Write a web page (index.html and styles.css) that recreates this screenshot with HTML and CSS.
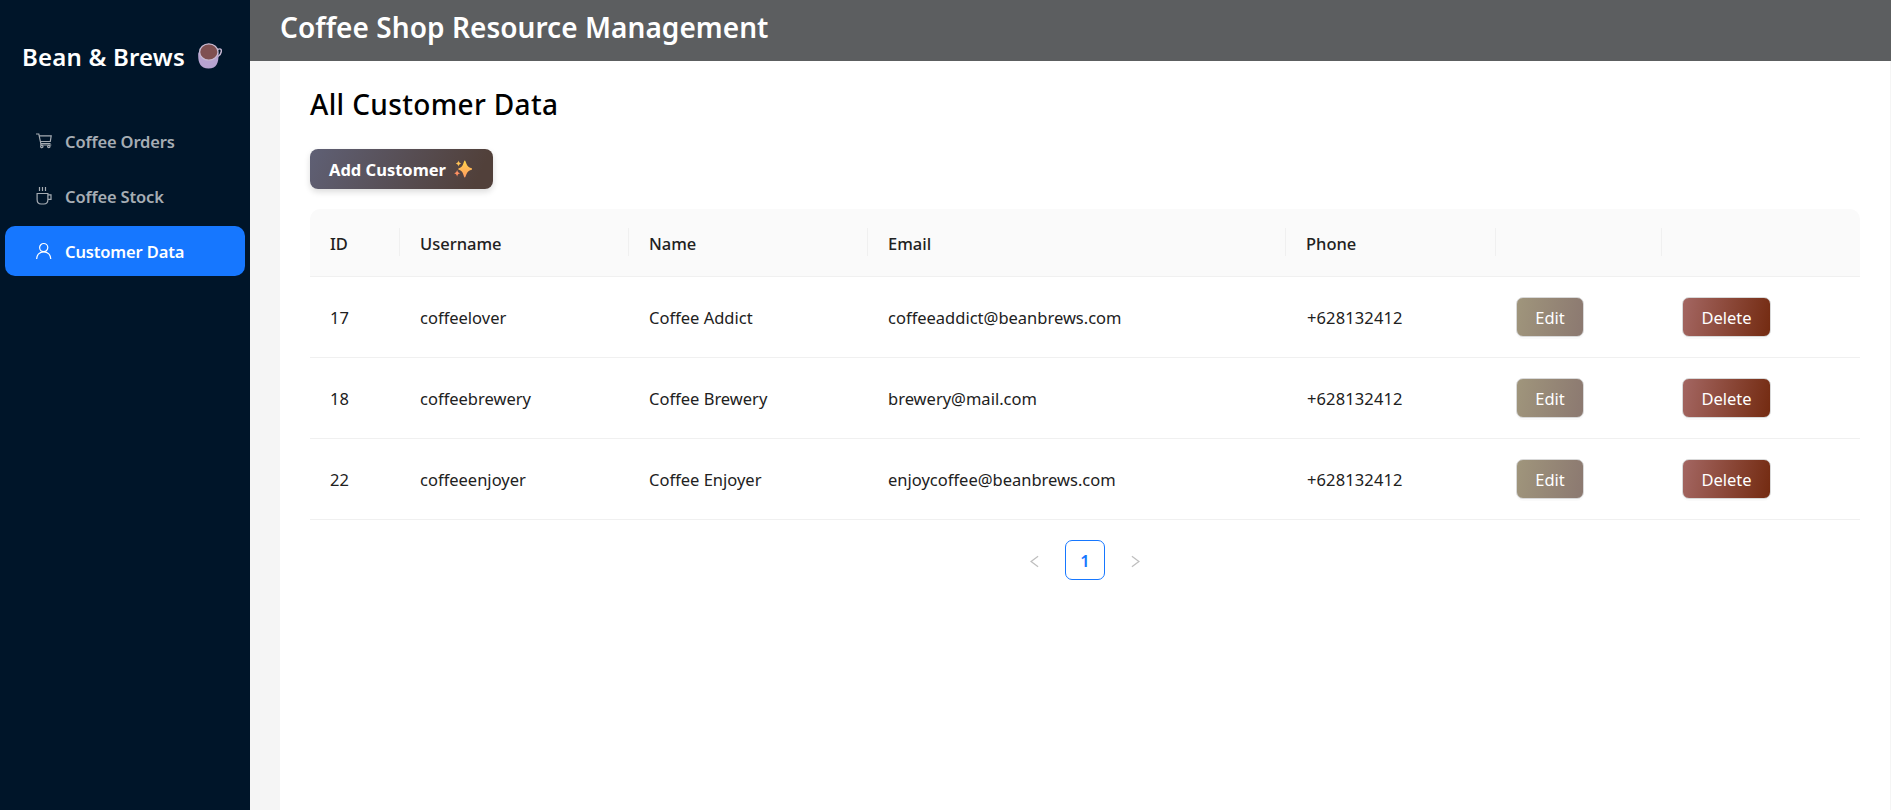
FILE: index.html
```html
<!DOCTYPE html>
<html lang="en">
<head>
<meta charset="utf-8">
<title>Coffee Shop Resource Management</title>
<link rel="stylesheet" href="styles.css">
</head>
<body>
<div class="layout">
  <aside class="sider">
    <div class="brand">
      <span class="brand-name">Bean &amp; Brews</span>
      <svg class="cup" viewBox="0 0 24 26">
        <path d="M19.500 6.500c2.500-1.300 4.300-.5 3.800 2.200-.4 2.500-1.600 4-3.600 5" fill="none" stroke="#c3b5d0" stroke-width="1.500"/>
        <path d="M.3 9.500c-.6 9 1 16 10.200 16S20.800 18.500 20.500 9.500z" fill="#b7a3d0"/>
        <ellipse cx="10.800" cy="9" rx="9.200" ry="8.200" fill="#7f5051" stroke="#c8bad2" stroke-width="1.300"/>
      </svg>
    </div>
    <nav class="menu">
      <a class="item"><svg class="icon" viewBox="0 0 16 16"><path d="M0 1h2.800l2 9.500h9.700M3.200 2.800h12L14.300 8.500H4.500M4.800 10.500v1.500h10.500"/><circle cx="5.800" cy="13.500" r="1.200"/><circle cx="12.800" cy="13.500" r="1.200"/></svg><span>Coffee Orders</span></a>
      <a class="item"><svg class="icon" viewBox="0 0 16 18"><path d="M3.500 0v4M6.500 0v4M9.500 0v4M1.100 6.500h10.800v6c0 2.800-1.500 4.500-4 4.500H5.100c-2.500 0-4-1.700-4-4.500zM12 7.800h3v4.600h-3"/></svg><span>Coffee Stock</span></a>
      <a class="item active"><svg class="icon" viewBox="0 0 16 16"><circle cx="7.700" cy="4.600" r="4.100"/><path d="M.6 16c0-4 3-7.200 7.100-7.200s7.100 3.200 7.100 7.200"/></svg><span>Customer Data</span></a>
    </nav>
  </aside>
  <div class="main">
    <header class="topbar"><h1>Coffee Shop Resource Management</h1></header>
    <main class="content">
      <h2>All Customer Data</h2>
      <button class="add"><span>Add Customer</span><svg class="sparkles" viewBox="0 0 18 18"><defs><linearGradient id="spark" x1="0" y1="0" x2="0" y2="1"><stop offset="0" stop-color="#ffd54a"/><stop offset="1" stop-color="#ff9a62"/></linearGradient></defs><path fill="url(#spark)" d="M10.800.5c1.300 0 .9 6.300 6.700 7.700 1 .3 1 1.300 0 1.600-5.800 1.400-5.400 7.700-6.700 7.700S9.900 11.200 5 9.800c-1-.3-1-1.300 0-1.600C9.900 6.800 9.500.5 10.800.5z"/><path fill="#ffc257" d="M4.500.5c.5 1.900 1 2.500 2.700 3-1.700.5-2.200 1.100-2.700 3C4 4.600 3.500 4 1.800 3.500 3.500 3 4 2.400 4.500.5z"/><path fill="#ff9163" d="M3.100 9.700c.5 2.300 1.200 3 3 3.500-1.800.5-2.500 1.200-3 3.500-.5-2.300-1.200-3-3-3.500 1.800-.5 2.500-1.200 3-3.500z"/></svg></button>
      <table class="table">
        <colgroup><col class="c1"><col class="c2"><col class="c3"><col class="c4"><col class="c5"><col class="c6"><col class="c7"></colgroup>
        <thead><tr><th>ID</th><th>Username</th><th>Name</th><th>Email</th><th>Phone</th><th></th><th></th></tr></thead>
        <tbody>
          <tr><td>17</td><td>coffeelover</td><td>Coffee Addict</td><td>coffeeaddict@beanbrews.com</td><td class="phone">+628132412</td><td><button class="btn edit">Edit</button></td><td><button class="btn delete">Delete</button></td></tr>
          <tr><td>18</td><td>coffeebrewery</td><td>Coffee Brewery</td><td>brewery@mail.com</td><td class="phone">+628132412</td><td><button class="btn edit">Edit</button></td><td><button class="btn delete">Delete</button></td></tr>
          <tr><td>22</td><td>coffeeenjoyer</td><td>Coffee Enjoyer</td><td>enjoycoffee@beanbrews.com</td><td class="phone">+628132412</td><td><button class="btn edit">Edit</button></td><td><button class="btn delete">Delete</button></td></tr>
        </tbody>
      </table>
      <div class="pager">
        <svg class="arrow" viewBox="0 0 10 14"><path d="M9 1.200 1.200 7 9 12.800"/></svg>
        <span class="page">1</span>
        <svg class="arrow" viewBox="0 0 10 14"><path d="M1 1.200 8.800 7 1 12.800"/></svg>
      </div>
    </main>
  </div>
</div>
</body>
</html>
```
FILE: styles.css
```css
* { box-sizing: border-box; }
body { margin: 0; font-family: "Noto Sans", "Open Sans", sans-serif; font-size: 16.5px; overflow: hidden; }
h1, h2 { margin: 0; font-weight: 500; white-space: nowrap; }
button { font-family: inherit; margin: 0; }
.layout { display: flex; height: 810px; background: #f5f5f5; }
.sider { width: 250px; flex: none; background: #001529; }
.brand { display: flex; align-items: center; height: 112px; padding-left: 22px; color: #fff; }
.brand-name { width: 176px; font-size: 24px; font-weight: 600; letter-spacing: .2px; white-space: nowrap; }
.cup { width: 24px; height: 26px; }
.menu { display: flex; flex-direction: column; gap: 5px; padding: 4px 5px; }
.item { display: flex; align-items: center; height: 50px; padding-left: 31px; border-radius: 10px; color: #a6adb4; font-weight: 600; font-size: 16.5px; letter-spacing: -.14px; }
.item span { margin-left: 13px; white-space: nowrap; }
.icon { width: 16px; height: 18px; fill: none; stroke: currentColor; stroke-width: 1.2; overflow: visible; }
.active { background: #1677ff; color: #fff; }
.main { flex: 1; min-width: 0; }
.topbar { height: 61px; padding: 6px 30px 0; background: #5c5e60; color: #fff; }
h1 { font-size: 28px; line-height: 42px; font-weight: 600; letter-spacing: .05px; }
.content { height: 749px; margin: 0 1px 0 30px; padding: 22px 30px; background: #fff; }
h2 { font-size: 28px; line-height: 42px; color: #000; letter-spacing: .35px; }
.add { display: flex; align-items: center; width: 183px; height: 40px; margin: 24px 0 20px; padding: 0 0 0 19px; border: 0; border-radius: 8px; background: linear-gradient(115deg, #5f6075, #51403a 90%); box-shadow: 0 3px 6px rgba(0,0,0,.14); color: #fff; font-size: 16.5px; font-weight: 700; }
.add span { width: 125px; text-align: left; white-space: nowrap; }
.sparkles { width: 18px; height: 18px; }
.table { width: 1550px; table-layout: fixed; border-collapse: separate; border-spacing: 0; color: #212121; }
.c1 { width: 90px; } .c2 { width: 229px; } .c3 { width: 239px; } .c4 { width: 418px; } .c5 { width: 210px; } .c6 { width: 166px; } .c7 { width: 198px; }
th, td { padding: 0 20px; text-align: left; border-bottom: 1px solid #f0f0f0; white-space: nowrap; }
th { height: 68px; padding-top: 2px; font-weight: 500; background: linear-gradient(#f0f0f0, #f0f0f0) right 19px / 1px 28px no-repeat #fafafa; }
th:first-child { border-top-left-radius: 10px; }
th:last-child { border-top-right-radius: 10px; background: #fafafa; }
td { height: 81px; }
.phone { padding-left: 21px; letter-spacing: .12px; }
.btn { display: block; height: 40px; padding: 0; border: 1px solid #d9d9d9; border-radius: 7px; box-shadow: 0 2px 0 rgba(0,0,0,.02); color: #fff; font-size: 16.5px; background-origin: border-box; }
.edit { width: 68px; background-image: linear-gradient(100deg, #a0967c, #8b7870); }
.delete { width: 89px; background-image: linear-gradient(100deg, #a46763, #732a10); }
.pager { display: flex; justify-content: center; align-items: center; gap: 26px; height: 40px; margin-top: 20px; }
.page { display: flex; align-items: center; justify-content: center; width: 40px; height: 40px; border: 1px solid #1677ff; border-radius: 7px; color: #1677ff; font-weight: 600; }
.arrow { width: 9px; height: 13px; margin-top: 2px; fill: none; stroke: #bfbfbf; stroke-width: 1.4; }
```
